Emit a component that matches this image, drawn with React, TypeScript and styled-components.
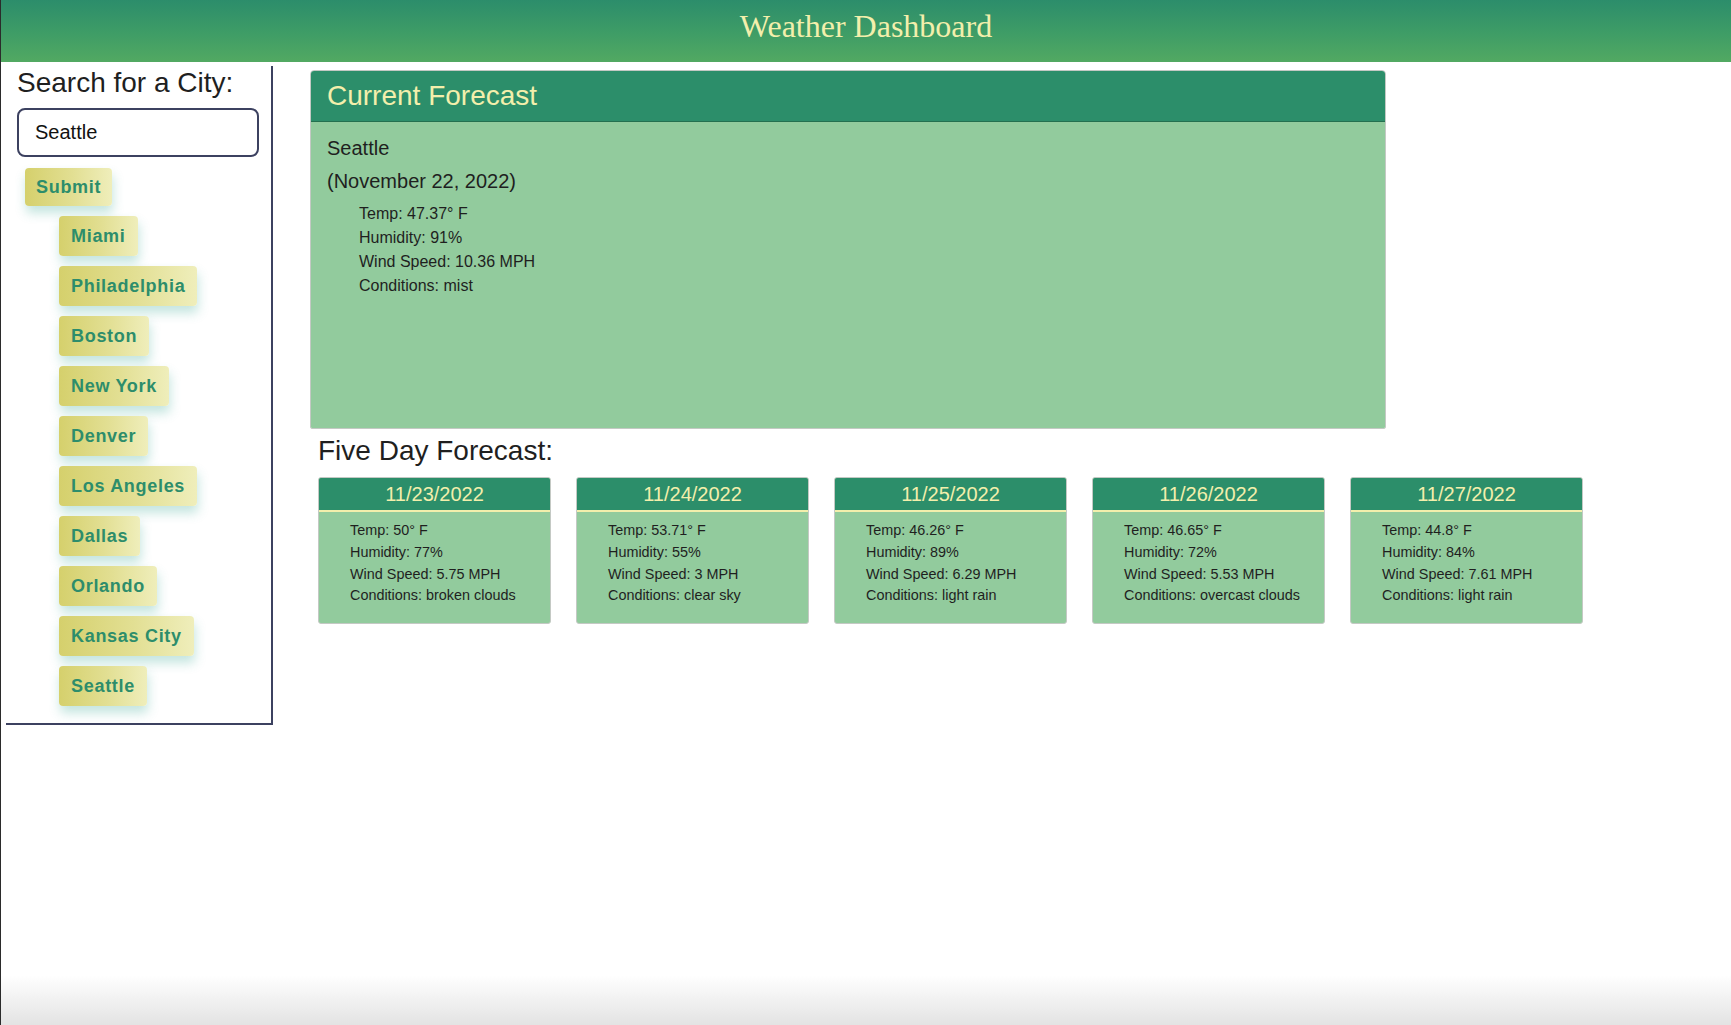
import { createGlobalStyle, styled } from "styled-components";

const GlobalStyle = createGlobalStyle`
  html {
    min-height: 100%;
    background: linear-gradient(to bottom, #ffffff 0, #ffffff 975px, #e3e3e3 1025px);
    border-left: 1px solid #2b2b2b;
  }

  body {
    margin: 0;
    font-family: "Liberation Sans", Arial, sans-serif;
    color: #1f1f1f;
  }

  * {
    box-sizing: border-box;
  }
`;

const current = {
  city: "Seattle",
  date: "(November 22, 2022)",
  temp: "47.37",
  humidity: "91",
  wind: "10.36",
  conditions: "mist",
};

const forecast = [
  { date: "11/23/2022", temp: "50", humidity: "77", wind: "5.75", conditions: "broken clouds" },
  { date: "11/24/2022", temp: "53.71", humidity: "55", wind: "3", conditions: "clear sky" },
  { date: "11/25/2022", temp: "46.26", humidity: "89", wind: "6.29", conditions: "light rain" },
  { date: "11/26/2022", temp: "46.65", humidity: "72", wind: "5.53", conditions: "overcast clouds" },
  { date: "11/27/2022", temp: "44.8", humidity: "84", wind: "7.61", conditions: "light rain" },
];

const cities = [
  "Miami",
  "Philadelphia",
  "Boston",
  "New York",
  "Denver",
  "Los Angeles",
  "Dallas",
  "Orlando",
  "Kansas City",
  "Seattle",
];

const App = () => {
  return (
    <>
      <GlobalStyle />
      <Header>
        <HeaderTitle>Weather Dashboard</HeaderTitle>
      </Header>
      <PageLayout>
        <Sidebar>
          <SearchTitle>Search for a City:</SearchTitle>
          <SearchInput defaultValue="Seattle" />
          <SubmitButton>Submit</SubmitButton>
          <CityList>
            {cities.map((city) => (
              <CityButton key={city}>{city}</CityButton>
            ))}
          </CityList>
        </Sidebar>

        <MainColumn>
          <CurrentCard>
            <CurrentHeader>Current Forecast</CurrentHeader>
            <CurrentBody>
              <CurrentLine>{current.city}</CurrentLine>
              <CurrentLine>{current.date}</CurrentLine>
              <CurrentStats>
                <li>Temp: {current.temp}° F</li>
                <li>Humidity: {current.humidity}%</li>
                <li>Wind Speed: {current.wind} MPH</li>
                <li>Conditions: {current.conditions}</li>
              </CurrentStats>
            </CurrentBody>
          </CurrentCard>

          <FiveDayTitle>Five Day Forecast:</FiveDayTitle>
          <FiveDayRow>
            {forecast.map((day) => (
              <DayCard key={day.date}>
                <DayHeader>{day.date}</DayHeader>
                <DayStats>
                  <li>Temp: {day.temp}° F</li>
                  <li>Humidity: {day.humidity}%</li>
                  <li>Wind Speed: {day.wind} MPH</li>
                  <li>Conditions: {day.conditions}</li>
                </DayStats>
              </DayCard>
            ))}
          </FiveDayRow>
        </MainColumn>
      </PageLayout>
    </>
  );
};

export default App;

const Header = styled.header`
  height: 62px;
  padding-bottom: 9px;

  display: flex;
  align-items: center;
  justify-content: center;

  background: linear-gradient(to bottom, #2c8d6b 0%, #3f9d66 55%, #52a962 100%);
`;

const HeaderTitle = styled.h1`
  margin: 0;

  font-family: "Liberation Serif", "Times New Roman", serif;
  font-size: 32px;
  font-weight: 400;
  color: #f3efac;
`;

const PageLayout = styled.div`
  display: flex;
  align-items: flex-start;
`;

const Sidebar = styled.aside`
  width: 267px;
  margin: 4px 0 0 5px;
  padding: 0 12px 17px 11px;

  display: flex;
  flex-direction: column;
  align-items: flex-start;

  border-right: 2px solid #3c4160;
  border-bottom: 2px solid #3c4160;
`;

const SearchTitle = styled.h2`
  margin: 0;

  font-size: 28px;
  font-weight: 400;
  line-height: 34px;
  color: #1f1f1f;
`;

const SearchInput = styled.input`
  width: 242px;
  height: 49px;
  margin: 8px 0 0 0;
  padding: 0 16px;

  border: 2px solid #3c4160;
  border-radius: 8px;

  font-family: "Liberation Sans", Arial, sans-serif;
  font-size: 20px;
  color: #111;
  background: #fff;
  outline: none;
`;

const PillButton = styled.button`
  height: 40px;
  padding: 0 12px;

  border: none;
  border-radius: 4px;
  background: linear-gradient(to right, #d5d06c 0%, #e2df93 55%, #efeebb 100%);
  box-shadow: 1px 7px 11px rgba(60, 170, 150, 0.3);

  font-family: "Liberation Sans", Arial, sans-serif;
  font-size: 18px;
  font-weight: 700;
  letter-spacing: 0.7px;
  color: #2d8d6b;

  &:hover {
    cursor: pointer;
  }
`;

const SubmitButton = styled(PillButton)`
  height: 38px;
  margin: 11px 0 0 8px;
  padding: 0 11px;
`;

const CityList = styled.div`
  margin: 10px 0 0 42px;

  display: flex;
  flex-direction: column;
  align-items: flex-start;
  gap: 10px;
`;

const CityButton = styled(PillButton)``;

const MainColumn = styled.main`
  margin: 8px 0 0 37px;

  display: flex;
  flex-direction: column;
`;

const CurrentCard = styled.section`
  width: 1076px;

  border: 1px solid #c4c9c4;
  border-radius: 4px 4px 2px 2px;
  overflow: hidden;
`;

const CurrentHeader = styled.h2`
  height: 51px;
  margin: 0;
  padding: 0 16px;

  display: flex;
  align-items: center;

  background: #2c8e6a;
  border-bottom: 1px solid #24704f;

  font-size: 28px;
  font-weight: 400;
  color: #f3efac;
`;

const CurrentBody = styled.div`
  min-height: 306px;
  padding: 10px 16px;

  background: #92cb9d;
`;

const CurrentLine = styled.p`
  margin: 0;

  font-size: 20px;
  line-height: 33px;
  color: #1f1f1f;
`;

const CurrentStats = styled.ul`
  margin: 4px 0 0 0;
  padding-left: 32px;

  list-style: none;

  font-size: 16px;
  line-height: 24px;
  color: #1f1f1f;
`;

const FiveDayTitle = styled.h3`
  margin: 5px 0 0 8px;

  font-size: 28px;
  font-weight: 400;
  line-height: 34px;
  color: #1f1f1f;
`;

const FiveDayRow = styled.div`
  margin: 9px 0 0 8px;

  display: flex;
  gap: 25px;
`;

const DayCard = styled.div`
  width: 233px;

  border: 1px solid #c4c9c4;
  border-radius: 3px;
  background: #92cb9d;
  overflow: hidden;
`;

const DayHeader = styled.div`
  height: 34px;

  display: flex;
  align-items: center;
  justify-content: center;

  background: #2c8e6a;
  border-bottom: 2px solid #f3efac;

  font-size: 20px;
  color: #f3efac;
`;

const DayStats = styled.ul`
  margin: 0;
  padding: 8px 0 16px 31px;

  list-style: none;

  font-size: 14.4px;
  line-height: 21.75px;
  color: #1f1f1f;
`;
